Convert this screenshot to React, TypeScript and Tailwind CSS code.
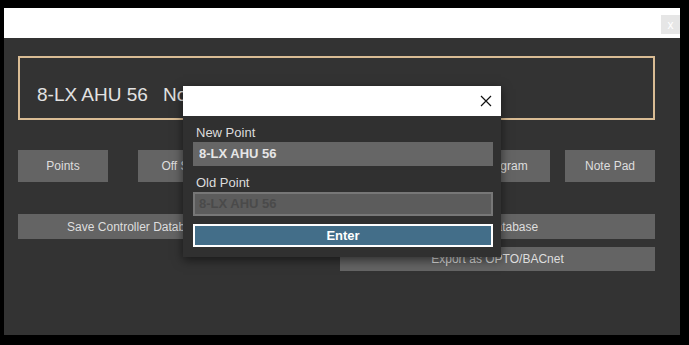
import { useState } from 'react'

const TOP_BUTTONS = [
  { label: 'Points', cls: '' },
  { label: 'Off Sets', cls: 'ml-[30px]' },
  { label: 'Trend Log', cls: 'ml-auto' },
  { label: 'Diagram', cls: 'ml-[15px]' },
  { label: 'Note Pad', cls: 'ml-[15px]' },
]

function RenameDialog() {
  const [name, setName] = useState('8-LX AHU 56')

  return (
    <div className="absolute left-[183px] top-[86px] w-[318px] h-[171px] bg-[#303030] shadow-[0_3px_10px_rgba(0,0,0,0.55)]">
      {/* Dialog header */}
      <div className="flex h-[30px] items-center justify-end bg-white pr-[9px]">
        <svg width="12" height="12" viewBox="0 0 12 12" className="block">
          <path d="M1 1 L11 11 M11 1 L1 11" stroke="#111" strokeWidth="1.2" fill="none" />
        </svg>
      </div>

      <div className="pl-[10px] pr-[8px] pt-[9px]">
        <div className="text-[13px] leading-[15px] text-[#dcdcdc] pl-[3px]">New Point</div>
        <input
          value={name}
          onChange={(e) => setName(e.target.value)}
          className="mt-[2px] block h-[24px] w-[300px] bg-[#666666] px-[6px] pb-[2px] text-[13px] font-bold text-[#e6e6e6] outline-none"
        />

        <div className="mt-[9px] text-[13px] leading-[15px] text-[#dcdcdc] pl-[3px]">Old Point</div>
        <input
          value="8-LX AHU 56"
          disabled
          className="mt-[2px] block h-[24px] w-[300px] border-2 border-[#777777] bg-[#5c5c5c] px-[4px] pb-[2px] text-[13px] font-bold text-[#4a4a4a] outline-none"
        />

        <button className="mt-[8px] block h-[23px] w-[300px] border-2 border-white bg-[#436e89] text-[13px] font-bold leading-[18px] text-white">
          Enter
        </button>
      </div>
    </div>
  )
}

export default function App() {
  return (
    <div className="relative h-[345px] w-[689px] bg-black pt-[8px] pl-[4px] font-['Liberation_Sans',Arial,sans-serif]">
      <div className="w-[676px] h-[327px] flex flex-col">
        {/* Window title bar */}
        <div className="flex h-[30px] items-start justify-end bg-white pt-[7px]">
          <div className="flex h-[19px] w-[19px] items-center justify-center bg-[#e6e6e6] text-[12px] leading-none text-white">
            x
          </div>
        </div>

        <div className="flex-1 bg-[#333333] pl-[14px] pr-[25px] pt-[18px]">
          {/* Controller header */}
          <div className="flex h-[64px] items-center border-2 border-[#d9bc94] pl-[17px] pt-[15px] text-[19px] text-[#e2e2e2]">
            <span>8-LX AHU 56</span>
            <span className="ml-[15px]">Node 56 - Lab Exhaust</span>
          </div>

          {/* Main actions */}
          <div className="mt-[30px] flex">
            {TOP_BUTTONS.map((b) => (
              <button
                key={b.label}
                className={`h-[32px] w-[90px] bg-[#646464] text-[12px] text-[#dedede] ${b.cls}`}
              >
                {b.label}
              </button>
            ))}
          </div>

          <div className="mt-[32px] grid grid-cols-2 gap-x-[7px] gap-y-[8px]">
            <button className="h-[25px] bg-[#646464] text-[12px] text-[#dedede]">
              Save Controller Database to a Computer
            </button>
            <button className="h-[25px] bg-[#646464] text-[12px] text-[#dedede]">Load Database</button>
            <div />
            <button className="h-[24px] bg-[#646464] text-[12px] text-[#dedede]">Export as OPTO/BACnet</button>
          </div>
        </div>
      </div>

      <RenameDialog />
    </div>
  )
}
